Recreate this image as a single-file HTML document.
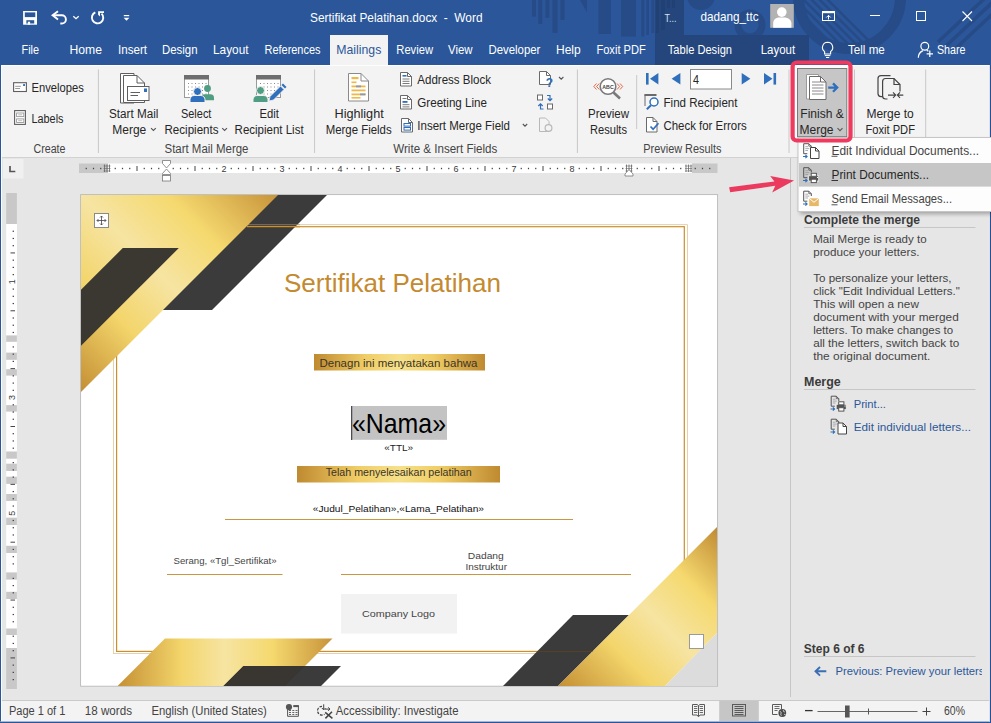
<!DOCTYPE html>
<html lang="en"><head><meta charset="utf-8"><title>Sertifikat Pelatihan.docx - Word</title>
<style>
html,body{margin:0;padding:0;background:#e6e6e6;overflow:hidden}
svg{display:block;font-family:"Liberation Sans",sans-serif}
text{white-space:pre}
</style></head><body>
<svg width="991" height="723" viewBox="0 0 991 723">
<defs>
<clipPath id="hd"><rect x="0" y="0" width="991" height="65"/></clipPath>
<clipPath id="bigc"><circle cx="849.5" cy="-2.5" r="56"/></clipPath>
<clipPath id="pg"><rect x="81" y="195" width="636" height="491"/></clipPath>
<linearGradient id="gTL" gradientUnits="userSpaceOnUse" x1="81" y1="391" x2="277" y2="195">
<stop offset="0" stop-color="#c48f33"/><stop offset="0.28" stop-color="#f3d56b"/><stop offset="0.5" stop-color="#f6e4a2"/><stop offset="0.72" stop-color="#f5d96f"/><stop offset="1" stop-color="#c8943a"/></linearGradient>
<linearGradient id="gBR" gradientUnits="userSpaceOnUse" x1="558" y1="686" x2="717" y2="527">
<stop offset="0" stop-color="#c48f33"/><stop offset="0.3" stop-color="#f3d56b"/><stop offset="0.52" stop-color="#f6e4a2"/><stop offset="0.74" stop-color="#f5d96f"/><stop offset="1" stop-color="#c08a32"/></linearGradient>
<linearGradient id="gBL" gradientUnits="userSpaceOnUse" x1="117" y1="0" x2="332" y2="0">
<stop offset="0" stop-color="#c48f33"/><stop offset="0.3" stop-color="#f3d56b"/><stop offset="0.5" stop-color="#f6e4a2"/><stop offset="0.72" stop-color="#f5d96f"/><stop offset="1" stop-color="#c8943a"/></linearGradient>
<linearGradient id="gBan" x1="0" y1="0" x2="1" y2="0">
<stop offset="0" stop-color="#bf8a30"/><stop offset="0.3" stop-color="#f0cd66"/><stop offset="0.5" stop-color="#f6e08a"/><stop offset="0.7" stop-color="#f0cd66"/><stop offset="1" stop-color="#bf8a30"/></linearGradient>
<clipPath id="pclip"><rect x="790" y="660" width="192" height="25"/></clipPath>
<filter id="sh" x="-10%" y="-10%" width="120%" height="130%"><feGaussianBlur stdDeviation="2.2"/></filter>
</defs>
<rect x="0" y="0" width="991" height="65" fill="#2b579a" />
<g clip-path="url(#hd)">
<rect x="532" y="0" width="4" height="16.5" fill="#264b87" />
<rect x="538.3" y="0" width="4" height="24" fill="#264b87" />
<rect x="545.4" y="0" width="4" height="17.7" fill="#264b87" />
<rect x="552.5" y="0" width="5" height="32.8" fill="#264b87" />
<rect x="560.5" y="0" width="4" height="20" fill="#264b87" />
<rect x="598.4" y="0" width="12.6" height="34" fill="#264b87" />
<rect x="621" y="0" width="15" height="36.6" fill="#264b87" />
<rect x="641.3" y="0" width="3" height="36.6" fill="#264b87" />
<rect x="646.3" y="0" width="2.6" height="35" fill="#264b87" />
<rect x="651.4" y="0" width="3" height="33" fill="#264b87" />
<path d="M580 0 H587 V12.6 Z" fill="#264b87"/>
<circle cx="701" cy="-4" r="14" fill="#264b87"/>
<g fill="none" stroke="#264b87">
<circle cx="750" cy="25" r="12" stroke-width="7"/>
<circle cx="849.5" cy="-2.5" r="51" stroke-width="11"/>
<g clip-path="url(#bigc)"><path d="M786 -2 L836 48 M794 -2 L844 48 M802 -2 L852 48 M810 -2 L860 48 M818 -2 L868 48 M826 -2 L876 48" stroke-width="2.6"/></g>
<path d="M938 42 L985 -2 M946 46 L995 0 M954 50 L1000 7" stroke-width="3.5"/>
</g></g>
<rect x="655" y="0" width="29" height="35" fill="#24467c" />
<rect x="655" y="35" width="154" height="30" fill="#24467c" />
<rect x="656" y="0" width="3" height="33" fill="#214175" />
<rect x="661" y="0" width="4" height="30" fill="#214175" />
<rect x="667" y="0" width="3" height="8" fill="#214175" />
<rect x="672" y="0" width="3" height="8" fill="#214175" />
<rect x="23.1" y="11" width="13.9" height="13.7" fill="#ffffff" />
<rect x="24.8" y="12.4" width="10.5" height="4.7" fill="#2b579a" />
<rect x="26.2" y="20.2" width="8" height="3.3" fill="#2b579a" />
<rect x="24.8" y="19.8" width="1.4" height="3.7" fill="#ffffff" />
<rect x="27.8" y="21.7" width="2.3" height="3" fill="#ffffff" />
<path d="M53 15.3 H61.8 a4.1 4.1 0 0 1 0 8.2 H60.3" fill="none" stroke="#ffffff" stroke-width="1.9"/>
<path d="M58 11.2 L52.6 15.3 L58 19.4" fill="none" stroke="#ffffff" stroke-width="1.9"/>
<path d="M73.3 16.2 L76 18.7 L78.7 16.2" fill="none" stroke="#ffffff" stroke-width="1.3"/>
<path d="M95.3 12.4 A5.7 5.7 0 1 0 101.6 13.6" fill="none" stroke="#ffffff" stroke-width="1.9"/>
<path d="M98.1 11.2 H104 V12.9 H100 V16.5 L98.1 14.8 Z" fill="#ffffff"/>
<rect x="123.8" y="15" width="5.4" height="1.2" fill="#ffffff" />
<path d="M123.6 17.8 H129.4 L126.5 20.8 Z" fill="#ffffff"/>
<text x="310" y="22.3" font-size="12.5" fill="#ffffff" textLength="172.5" lengthAdjust="spacingAndGlyphs">Sertifikat Pelatihan.docx  -  Word</text>
<text x="664.5" y="22" font-size="10.5" fill="#d8e0ee" textLength="12" lengthAdjust="spacingAndGlyphs">T...</text>
<text x="700.5" y="20.8" font-size="12.7" fill="#ffffff" textLength="58" lengthAdjust="spacingAndGlyphs">dadang_ttc</text>
<rect x="770.2" y="4" width="23.6" height="23.8" fill="#b2b2b2" />
<circle cx="781.8" cy="12.1" r="4.8" fill="#fff"/>
<path d="M773.2 27.8 V23.2 C773.2 19.6 776.3 17.5 779 17.5 H784.6 C787.3 17.5 791.4 19.6 791.4 23.2 V27.8 Z" fill="#ffffff"/>
<rect x="822.5" y="11.5" width="12" height="9" fill="none" stroke="#ffffff" stroke-width="1"/>
<rect x="822" y="11" width="13" height="2.2" fill="#ffffff" />
<path d="M828.5 19.5 V15.5 M826.3 17.5 L828.5 15.3 L830.7 17.5" fill="none" stroke="#ffffff" stroke-width="1"/>
<line x1="870" y1="15.5" x2="880" y2="15.5" stroke="#ffffff" stroke-width="1" />
<rect x="916.5" y="11.5" width="9" height="9" fill="none" stroke="#ffffff" stroke-width="1"/>
<path d="M962.5 11.5 L972 21 M972 11.5 L962.5 21" fill="none" stroke="#ffffff" stroke-width="1.1"/>
<rect x="330" y="35" width="58" height="31" fill="#f3f3f3" />
<text x="21.5" y="53.7" font-size="12.7" fill="#ffffff" textLength="17.5" lengthAdjust="spacingAndGlyphs">File</text>
<text x="69.5" y="53.7" font-size="12.7" fill="#ffffff" textLength="32.5" lengthAdjust="spacingAndGlyphs">Home</text>
<text x="118" y="53.7" font-size="12.7" fill="#ffffff" textLength="29" lengthAdjust="spacingAndGlyphs">Insert</text>
<text x="162" y="53.7" font-size="12.7" fill="#ffffff" textLength="35.5" lengthAdjust="spacingAndGlyphs">Design</text>
<text x="213" y="53.7" font-size="12.7" fill="#ffffff" textLength="35.5" lengthAdjust="spacingAndGlyphs">Layout</text>
<text x="264.5" y="53.7" font-size="12.7" fill="#ffffff" textLength="56" lengthAdjust="spacingAndGlyphs">References</text>
<text x="396.3" y="53.7" font-size="12.7" fill="#ffffff" textLength="36.7" lengthAdjust="spacingAndGlyphs">Review</text>
<text x="448" y="53.7" font-size="12.7" fill="#ffffff" textLength="24.5" lengthAdjust="spacingAndGlyphs">View</text>
<text x="488.4" y="53.7" font-size="12.7" fill="#ffffff" textLength="52" lengthAdjust="spacingAndGlyphs">Developer</text>
<text x="556" y="53.7" font-size="12.7" fill="#ffffff" textLength="24.7" lengthAdjust="spacingAndGlyphs">Help</text>
<text x="596.4" y="53.7" font-size="12.7" fill="#ffffff" textLength="49.4" lengthAdjust="spacingAndGlyphs">Foxit PDF</text>
<text x="667.8" y="53.7" font-size="12.7" fill="#ffffff" textLength="64.2" lengthAdjust="spacingAndGlyphs">Table Design</text>
<text x="760.7" y="53.7" font-size="12.7" fill="#ffffff" textLength="34.5" lengthAdjust="spacingAndGlyphs">Layout</text>
<text x="848" y="53.7" font-size="12.7" fill="#ffffff" textLength="36.8" lengthAdjust="spacingAndGlyphs">Tell me</text>
<text x="937" y="53.7" font-size="12.7" fill="#ffffff" textLength="28.5" lengthAdjust="spacingAndGlyphs">Share</text>
<text x="336.3" y="53.7" font-size="12.7" fill="#2b579a" textLength="45" lengthAdjust="spacingAndGlyphs">Mailings</text>
<path d="M827.6 42.2 a5.2 5.2 0 0 1 3 9.4 v2.4 h-6 v-2.4 a5.2 5.2 0 0 1 3 -9.4 Z" fill="none" stroke="#ffffff" stroke-width="1.1"/>
<line x1="824.8" y1="55.6" x2="830.4" y2="55.6" stroke="#ffffff" stroke-width="1" />
<line x1="826" y1="57.5" x2="829.2" y2="57.5" stroke="#ffffff" stroke-width="1" />
<circle cx="924.8" cy="46.3" r="3.9" fill="none" stroke="#ffffff" stroke-width="1.2"/>
<path d="M918.3 57.8 a8 8 0 0 1 4.6 -7.2 M926.8 50.4 a6 6 0 0 1 1.6 0.9" fill="none" stroke="#ffffff" stroke-width="1.2"/>
<path d="M929.8 50.6 V57 M926.6 53.8 H933" fill="none" stroke="#ffffff" stroke-width="1.2"/>
<rect x="0" y="65" width="991" height="1" fill="#fdfdfb" />
<rect x="0" y="66" width="991" height="91" fill="#f3f3f3" />
<rect x="0" y="157" width="991" height="1" fill="#d2d2d2" />
<line x1="98.4" y1="69.5" x2="98.4" y2="153" stroke="#c8c8c8" stroke-width="1" />
<line x1="314.6" y1="69.5" x2="314.6" y2="153" stroke="#c8c8c8" stroke-width="1" />
<line x1="577.4" y1="69.5" x2="577.4" y2="153" stroke="#c8c8c8" stroke-width="1" />
<line x1="789" y1="69.5" x2="789" y2="153" stroke="#c8c8c8" stroke-width="1" />
<line x1="854.5" y1="69.5" x2="854.5" y2="153" stroke="#c8c8c8" stroke-width="1" />
<line x1="925.7" y1="69.5" x2="925.7" y2="153" stroke="#c8c8c8" stroke-width="1" />
<line x1="636.7" y1="75" x2="636.7" y2="129" stroke="#c8c8c8" stroke-width="1" />
<text x="33.5" y="152.8" font-size="12.3" fill="#444444" textLength="32" lengthAdjust="spacingAndGlyphs">Create</text>
<text x="164.5" y="152.8" font-size="12.3" fill="#444444" textLength="84" lengthAdjust="spacingAndGlyphs">Start Mail Merge</text>
<text x="393.3" y="152.8" font-size="12.3" fill="#444444" textLength="104" lengthAdjust="spacingAndGlyphs">Write &amp; Insert Fields</text>
<text x="643.3" y="152.8" font-size="12.3" fill="#444444" textLength="78.2" lengthAdjust="spacingAndGlyphs">Preview Results</text>
<rect x="13.6" y="82.7" width="12.8" height="8.8" fill="#fff" stroke="#5f5f5f" stroke-width="1.1"/>
<line x1="15.2" y1="86.3" x2="20.9" y2="86.3" stroke="#999" stroke-width="1" />
<line x1="15.2" y1="88.5" x2="20" y2="88.5" stroke="#999" stroke-width="1" />
<rect x="23.1" y="84.1" width="1.9" height="1.9" fill="#2f6fbb" />
<text x="31.5" y="91.5" font-size="12.3" fill="#262626" textLength="52.3" lengthAdjust="spacingAndGlyphs">Envelopes</text>
<rect x="14.6" y="110.6" width="10.8" height="13.8" fill="#fff" stroke="#5f5f5f" stroke-width="1.1"/>
<rect x="16.6" y="113" width="7.2" height="3.6" fill="none" stroke="#999" stroke-width="0.9"/>
<rect x="16.6" y="118.9" width="7.2" height="3.6" fill="none" stroke="#999" stroke-width="0.9"/>
<line x1="18.2" y1="114.8" x2="22.2" y2="114.8" stroke="#aaa" stroke-width="0.8" />
<line x1="18.2" y1="120.7" x2="22.2" y2="120.7" stroke="#aaa" stroke-width="0.8" />
<text x="31.5" y="122.6" font-size="12.3" fill="#262626" textLength="32" lengthAdjust="spacingAndGlyphs">Labels</text>
<path d="M120.5 73.5 H134 V103 H120.5 Z" fill="#fff" stroke="#5f5f5f" stroke-width="1"/>
<path d="M123.5 75.5 H137 L144.5 83 V102.5 H123.5 Z" fill="#fff" stroke="#5f5f5f" stroke-width="1"/>
<path d="M137 75.5 V83 H144.5" fill="none" stroke="#5f5f5f" stroke-width="1"/>
<rect x="127.5" y="86.5" width="21.5" height="14" fill="#fff" stroke="#5f5f5f" stroke-width="1"/>
<line x1="130.5" y1="92.5" x2="140" y2="92.5" stroke="#5f5f5f" stroke-width="1" />
<line x1="130.5" y1="95.5" x2="138" y2="95.5" stroke="#5f5f5f" stroke-width="1" />
<rect x="144" y="88.5" width="3" height="3.5" fill="#2f6fbb" />
<text x="109" y="118" font-size="12.3" fill="#262626" textLength="49.4" lengthAdjust="spacingAndGlyphs">Start Mail</text>
<text x="112.3" y="133.7" font-size="12.3" fill="#262626" textLength="34" lengthAdjust="spacingAndGlyphs">Merge</text>
<path d="M151 128.1 L153.4 130.5 L155.8 128.1" fill="none" stroke="#555" stroke-width="1.1"/>
<rect x="184.5" y="75.5" width="24" height="22" fill="#fff" stroke="#9a9a9a" stroke-width="1"/>
<rect x="184" y="75" width="25" height="4.5" fill="#6e6e6e" />
<rect x="188" y="83" width="1" height="1" fill="#8a8a8a" />
<rect x="191.5" y="83" width="1" height="1" fill="#8a8a8a" />
<rect x="195" y="83" width="1" height="1" fill="#8a8a8a" />
<rect x="198.5" y="83" width="1" height="1" fill="#8a8a8a" />
<rect x="202" y="83" width="1" height="1" fill="#8a8a8a" />
<rect x="205.5" y="83" width="1" height="1" fill="#8a8a8a" />
<rect x="188" y="86.5" width="1" height="1" fill="#8a8a8a" />
<rect x="191.5" y="86.5" width="1" height="1" fill="#8a8a8a" />
<rect x="195" y="86.5" width="1" height="1" fill="#8a8a8a" />
<rect x="198.5" y="86.5" width="1" height="1" fill="#8a8a8a" />
<rect x="202" y="86.5" width="1" height="1" fill="#8a8a8a" />
<rect x="205.5" y="86.5" width="1" height="1" fill="#8a8a8a" />
<rect x="188" y="90" width="1" height="1" fill="#8a8a8a" />
<rect x="191.5" y="90" width="1" height="1" fill="#8a8a8a" />
<rect x="195" y="90" width="1" height="1" fill="#8a8a8a" />
<rect x="198.5" y="90" width="1" height="1" fill="#8a8a8a" />
<rect x="202" y="90" width="1" height="1" fill="#8a8a8a" />
<rect x="205.5" y="90" width="1" height="1" fill="#8a8a8a" />
<rect x="188" y="93.5" width="1" height="1" fill="#8a8a8a" />
<rect x="191.5" y="93.5" width="1" height="1" fill="#8a8a8a" />
<rect x="195" y="93.5" width="1" height="1" fill="#8a8a8a" />
<rect x="198.5" y="93.5" width="1" height="1" fill="#8a8a8a" />
<rect x="202" y="93.5" width="1" height="1" fill="#8a8a8a" />
<rect x="205.5" y="93.5" width="1" height="1" fill="#8a8a8a" />
<circle cx="207.5" cy="88.5" r="3.4" fill="#4f9d83"/>
<path d="M201 100.2 v-2.4 a3.6 3.6 0 0 1 3.6 -3.6 h5.8 a3.6 3.6 0 0 1 3.6 3.6 V100.2 Z" fill="#4f9d83"/>
<circle cx="197.5" cy="91.5" r="4" fill="#2f6fbb" stroke="#f3f3f3" stroke-width="1"/>
<path d="M190 102.5 v-2.8 a4.2 4.2 0 0 1 4.2 -4.2 h6.6 a4.2 4.2 0 0 1 4.2 4.2 V102.5 Z" fill="#2f6fbb" stroke="#f3f3f3" stroke-width="1"/>
<text x="181" y="118" font-size="12.3" fill="#262626" textLength="30.4" lengthAdjust="spacingAndGlyphs">Select</text>
<text x="164.5" y="133.7" font-size="12.3" fill="#262626" textLength="54" lengthAdjust="spacingAndGlyphs">Recipients</text>
<path d="M222.2 128.1 L224.6 130.5 L227 128.1" fill="none" stroke="#555" stroke-width="1.1"/>
<rect x="256.5" y="75.5" width="24" height="22" fill="#fff" stroke="#9a9a9a" stroke-width="1"/>
<rect x="256" y="75" width="25" height="4.5" fill="#6e6e6e" />
<rect x="260" y="83" width="1" height="1" fill="#8a8a8a" />
<rect x="263.5" y="83" width="1" height="1" fill="#8a8a8a" />
<rect x="267" y="83" width="1" height="1" fill="#8a8a8a" />
<rect x="270.5" y="83" width="1" height="1" fill="#8a8a8a" />
<rect x="274" y="83" width="1" height="1" fill="#8a8a8a" />
<rect x="277.5" y="83" width="1" height="1" fill="#8a8a8a" />
<rect x="260" y="86.5" width="1" height="1" fill="#8a8a8a" />
<rect x="263.5" y="86.5" width="1" height="1" fill="#8a8a8a" />
<rect x="267" y="86.5" width="1" height="1" fill="#8a8a8a" />
<rect x="270.5" y="86.5" width="1" height="1" fill="#8a8a8a" />
<rect x="274" y="86.5" width="1" height="1" fill="#8a8a8a" />
<rect x="277.5" y="86.5" width="1" height="1" fill="#8a8a8a" />
<rect x="260" y="90" width="1" height="1" fill="#8a8a8a" />
<rect x="263.5" y="90" width="1" height="1" fill="#8a8a8a" />
<rect x="267" y="90" width="1" height="1" fill="#8a8a8a" />
<rect x="270.5" y="90" width="1" height="1" fill="#8a8a8a" />
<rect x="274" y="90" width="1" height="1" fill="#8a8a8a" />
<rect x="277.5" y="90" width="1" height="1" fill="#8a8a8a" />
<rect x="260" y="93.5" width="1" height="1" fill="#8a8a8a" />
<rect x="263.5" y="93.5" width="1" height="1" fill="#8a8a8a" />
<rect x="267" y="93.5" width="1" height="1" fill="#8a8a8a" />
<rect x="270.5" y="93.5" width="1" height="1" fill="#8a8a8a" />
<rect x="274" y="93.5" width="1" height="1" fill="#8a8a8a" />
<rect x="277.5" y="93.5" width="1" height="1" fill="#8a8a8a" />
<circle cx="260.5" cy="90.5" r="4" fill="#4f9d83" stroke="#f3f3f3" stroke-width="1"/>
<path d="M253 102.5 v-2.8 a4.2 4.2 0 0 1 4.2 -4.2 h6.6 a4.2 4.2 0 0 1 4.2 4.2 V102.5 Z" fill="#4f9d83" stroke="#f3f3f3" stroke-width="1"/>
<path d="M270 96.5 L280.5 86 L284 89.5 L273.5 100 L269 101 Z" fill="#2f6fbb" stroke="#f3f3f3" stroke-width="0.8"/>
<path d="M281.5 85 L283 83.5 L286.5 87 L285 88.5 Z" fill="#2f6fbb"/>
<text x="259.6" y="118" font-size="12.3" fill="#262626" textLength="19.4" lengthAdjust="spacingAndGlyphs">Edit</text>
<text x="234.6" y="133.7" font-size="12.3" fill="#262626" textLength="69" lengthAdjust="spacingAndGlyphs">Recipient List</text>
<path d="M348.5 73.5 H361 L368.5 81 V101 H348.5 Z" fill="#fff" stroke="#8a8a8a" stroke-width="1"/>
<path d="M361 73.5 V81 H368.5" fill="none" stroke="#8a8a8a" stroke-width="1"/>
<rect x="351.5" y="77" width="7" height="2.2" fill="#f0b849" />
<rect x="351.5" y="81.5" width="5" height="1.6" fill="#f0b849" />
<rect x="351.5" y="85.5" width="14" height="1.8" fill="#f0b849" />
<rect x="351.5" y="89.5" width="14" height="1.8" fill="#f0b849" />
<rect x="351.5" y="93.5" width="14" height="1.8" fill="#f0b849" />
<rect x="351.5" y="97" width="9" height="1.6" fill="#f0b849" />
<rect x="356" y="85.5" width="5" height="1.8" fill="#8a9ab0" />
<rect x="360" y="93.5" width="5.5" height="1.8" fill="#8a9ab0" />
<text x="334.5" y="118" font-size="12.3" fill="#262626" textLength="49.2" lengthAdjust="spacingAndGlyphs">Highlight</text>
<text x="325.7" y="133.7" font-size="12.3" fill="#262626" textLength="66" lengthAdjust="spacingAndGlyphs">Merge Fields</text>
<path d="M400.5 72.5 h7 l4 4 v9.5 h-11 Z" fill="#fff" stroke="#6a6a6a" stroke-width="1"/>
<path d="M407.5 72.5 v4 h4" fill="none" stroke="#6a6a6a" stroke-width="1"/>
<rect x="402.5" y="75.0" width="4" height="1.6" fill="#2f6fbb" />
<line x1="402.5" y1="79.0" x2="409.5" y2="79.0" stroke="#7a7a7a" stroke-width="1" />
<line x1="402.5" y1="81.3" x2="409.5" y2="81.3" stroke="#7a7a7a" stroke-width="1" />
<line x1="402.5" y1="83.5" x2="409.5" y2="83.5" stroke="#7a7a7a" stroke-width="1" />
<text x="417.3" y="84" font-size="12.3" fill="#262626" textLength="73.7" lengthAdjust="spacingAndGlyphs">Address Block</text>
<path d="M400.5 95.5 h7 l4 4 v9.5 h-11 Z" fill="#fff" stroke="#6a6a6a" stroke-width="1"/>
<path d="M407.5 95.5 v4 h4" fill="none" stroke="#6a6a6a" stroke-width="1"/>
<line x1="402.5" y1="98.5" x2="406.5" y2="98.5" stroke="#7a7a7a" stroke-width="1" />
<rect x="402.5" y="101.0" width="5" height="1.8" fill="#2f6fbb" />
<line x1="402.5" y1="104.7" x2="409.5" y2="104.7" stroke="#7a7a7a" stroke-width="1" />
<line x1="402.5" y1="106.9" x2="409.5" y2="106.9" stroke="#7a7a7a" stroke-width="1" />
<text x="417.3" y="106.7" font-size="12.3" fill="#262626" textLength="69.7" lengthAdjust="spacingAndGlyphs">Greeting Line</text>
<path d="M401.5 118.5 h7 l4 4 v9.5 h-11 Z" fill="#fff" stroke="#6a6a6a" stroke-width="1"/>
<path d="M408.5 118.5 v4 h4" fill="none" stroke="#6a6a6a" stroke-width="1"/>
<rect x="404.0" y="123.5" width="6.5" height="2.6" fill="#fff" stroke="#2f6fbb" stroke-width="1"/>
<rect x="404.0" y="127.5" width="6.5" height="2.6" fill="#fff" stroke="#2f6fbb" stroke-width="1"/>
<text x="417.3" y="130.3" font-size="12.3" fill="#262626" textLength="92.7" lengthAdjust="spacingAndGlyphs">Insert Merge Field</text>
<path d="M522.8 124 L525 126.2 L527.2 124" fill="none" stroke="#555" stroke-width="1.1"/>
<path d="M539.5 71.5 h7 l4 4 v9 h-11 Z" fill="#fff" stroke="#6a6a6a" stroke-width="1"/>
<path d="M546.5 71.5 v4 h4" fill="none" stroke="#6a6a6a" stroke-width="1"/>
<text x="545.8" y="86.8" font-size="12" fill="#2f6fbb" font-weight="bold">?</text>
<path d="M559 77 L561.2 79.2 L563.4 77" fill="none" stroke="#555" stroke-width="1.1"/>
<rect x="537.5" y="95" width="5" height="5" fill="#fff" stroke="#6a6a6a" stroke-width="1"/>
<rect x="547.5" y="104" width="5" height="5" fill="#fff" stroke="#6a6a6a" stroke-width="1"/>
<path d="M547 95.5 h3 v5 M547.8 98.5 l2.2 2.2 l2.2 -2.2" fill="none" stroke="#2f6fbb" stroke-width="1.2"/>
<path d="M543.5 109 h-3 v-5 M538.3 106 l2.2 -2.2 l2.2 2.2" fill="none" stroke="#2f6fbb" stroke-width="1.2"/>
<path d="M539.5 118 h6 l3.5 3.5 v10 h-9.5 Z" fill="none" stroke="#b8b8b8" stroke-width="1"/>
<circle cx="548.5" cy="128" r="3.4" fill="#f3f3f3" stroke="#b8b8b8" stroke-width="1.2"/>
<circle cx="608" cy="86.5" r="7.8" fill="#fff" stroke="#7a7a7a" stroke-width="1.6"/>
<line x1="613.5" y1="92.5" x2="620" y2="98.5" stroke="#7a7a7a" stroke-width="2.6" />
<text x="602.3" y="89" font-size="6.2" fill="#444" font-weight="bold" textLength="11.4" lengthAdjust="spacingAndGlyphs">ABC</text>
<path d="M596.5 83.5 L593.8 86.5 L596.5 89.5 M599.3 83.5 L596.6 86.5 L599.3 89.5" fill="none" stroke="#e05a3a" stroke-width="0.9"/>
<path d="M617 83.5 L619.7 86.5 L617 89.5 M620 83.5 L622.7 86.5 L620 89.5" fill="none" stroke="#e05a3a" stroke-width="0.9"/>
<text x="588" y="118" font-size="12.3" fill="#262626" textLength="41" lengthAdjust="spacingAndGlyphs">Preview</text>
<text x="590" y="133.7" font-size="12.3" fill="#262626" textLength="37" lengthAdjust="spacingAndGlyphs">Results</text>
<rect x="646" y="73" width="2.6" height="11.6" fill="#2f6fbb" />
<path d="M658.4 73 V84.6 L650 78.8 Z" fill="#2f6fbb"/>
<path d="M680.4 73 V84.6 L671.6 78.8 Z" fill="#2f6fbb"/>
<rect x="690.5" y="69.5" width="41" height="19.5" fill="#fff" stroke="#8a8a8a" stroke-width="1"/>
<text x="693" y="84" font-size="12.3" fill="#262626" textLength="6" lengthAdjust="spacingAndGlyphs">4</text>
<path d="M741.7 73 V84.6 L750.4 78.8 Z" fill="#2f6fbb"/>
<path d="M764 73 V84.6 L772.5 78.8 Z" fill="#2f6fbb"/>
<rect x="773.5" y="73" width="2.6" height="11.6" fill="#2f6fbb" />
<path d="M645 106 V94.5 H656" fill="none" stroke="#6a6a6a" stroke-width="1"/>
<rect x="644.5" y="94" width="12" height="2" fill="#6a6a6a" />
<circle cx="654" cy="102" r="4" fill="#fff" stroke="#2f6fbb" stroke-width="1.5"/>
<line x1="651" y1="105.2" x2="646.8" y2="109.2" stroke="#2f6fbb" stroke-width="2" />
<text x="663.5" y="106.7" font-size="12.3" fill="#262626" textLength="74" lengthAdjust="spacingAndGlyphs">Find Recipient</text>
<path d="M646.5 117.5 h6.5 l4 4 v10.5 h-10.5 Z" fill="#fff" stroke="#6a6a6a" stroke-width="1"/>
<path d="M653 117.5 v4 h4" fill="none" stroke="#6a6a6a" stroke-width="1"/>
<path d="M650.5 126.5 l2.6 2.8 l5.4 -6" fill="none" stroke="#2f6fbb" stroke-width="1.7"/>
<text x="663.5" y="130.3" font-size="12.3" fill="#262626" textLength="83.2" lengthAdjust="spacingAndGlyphs">Check for Errors</text>
<rect x="794.5" y="65" width="54" height="73" fill="#fcfcfc" />
<rect x="797.5" y="68.5" width="49.3" height="68.2" fill="#c6c6c6" stroke="#7a7a7a" stroke-width="1"/>
<path d="M806.5 74.5 h12 V99 h-12 Z" fill="#fff" stroke="#9a9a9a" stroke-width="1"/>
<path d="M809.5 76.5 h11 l5.5 5.5 V99.5 h-16.5 Z" fill="#fff" stroke="#6a6a6a" stroke-width="1"/>
<path d="M820.5 76.5 v5.5 h5.5" fill="none" stroke="#6a6a6a" stroke-width="1"/>
<line x1="812" y1="82" x2="820" y2="82" stroke="#8a8a8a" stroke-width="1" />
<line x1="812" y1="85" x2="823.5" y2="85" stroke="#8a8a8a" stroke-width="1" />
<line x1="812" y1="88" x2="823.5" y2="88" stroke="#8a8a8a" stroke-width="1" />
<line x1="812" y1="91" x2="823.5" y2="91" stroke="#8a8a8a" stroke-width="1" />
<line x1="812" y1="94" x2="823.5" y2="94" stroke="#8a8a8a" stroke-width="1" />
<path d="M828.2 87.6 h7.5 M833 83.4 l4.2 4.2 l-4.2 4.2" fill="none" stroke="#2f6fbb" stroke-width="2.3"/>
<text x="800.3" y="118" font-size="12.3" fill="#262626" textLength="43.4" lengthAdjust="spacingAndGlyphs">Finish &amp;</text>
<text x="799.5" y="133.7" font-size="12.3" fill="#262626" textLength="34" lengthAdjust="spacingAndGlyphs">Merge</text>
<path d="M837.5 128.1 L840 130.6 L842.5 128.1" fill="none" stroke="#555" stroke-width="1.1"/>
<path d="M890.5 75.6 H881 a3 3 0 0 0 -3 3 V93.6 a3 3 0 0 0 3 3 H882.6" fill="none" stroke="#444" stroke-width="1.2"/>
<path d="M882.6 96 V81.5 a3 3 0 0 1 3 -3 H894 L900 84.5 V91.5" fill="none" stroke="#444" stroke-width="1.2"/>
<path d="M894 78.5 V84.5 H900" fill="none" stroke="#444" stroke-width="1.2"/>
<path d="M882.6 96 a3 3 0 0 0 3 3 H887.5" fill="none" stroke="#444" stroke-width="1.2"/>
<path d="M888 95.1 H895.6 M893 92.4 l2.7 2.7 l-2.7 2.7 M903.3 95.1 H897.4 M900 92.4 l-2.7 2.7 l2.7 2.7" fill="none" stroke="#444" stroke-width="1.1"/>
<text x="866.4" y="118" font-size="12.3" fill="#262626" textLength="47.4" lengthAdjust="spacingAndGlyphs">Merge to</text>
<text x="865.4" y="133.7" font-size="12.3" fill="#262626" textLength="49.6" lengthAdjust="spacingAndGlyphs">Foxit PDF</text>
<rect x="0" y="158" width="991" height="542" fill="#e6e6e6" />
<rect x="79" y="163.5" width="29" height="9.5" fill="#c8c8c8" />
<rect x="108" y="163.5" width="584" height="9.5" fill="#ffffff" />
<rect x="692" y="163.5" width="25.5" height="9.5" fill="#c8c8c8" />
<rect x="85.65" y="167.8" width="1.2" height="1.4" fill="#444" />
<rect x="92.9" y="167.8" width="1.2" height="1.4" fill="#444" />
<rect x="100.15" y="167.8" width="1.2" height="1.4" fill="#444" />
<rect x="114.65" y="167.8" width="1.2" height="1.4" fill="#444" />
<rect x="121.9" y="167.8" width="1.2" height="1.4" fill="#444" />
<rect x="129.15" y="167.8" width="1.2" height="1.4" fill="#444" />
<line x1="137.0" y1="166" x2="137.0" y2="171" stroke="#444" stroke-width="1" />
<rect x="143.65" y="167.8" width="1.2" height="1.4" fill="#444" />
<rect x="150.9" y="167.8" width="1.2" height="1.4" fill="#444" />
<rect x="158.15" y="167.8" width="1.2" height="1.4" fill="#444" />
<rect x="172.65" y="167.8" width="1.2" height="1.4" fill="#444" />
<rect x="179.9" y="167.8" width="1.2" height="1.4" fill="#444" />
<rect x="187.15" y="167.8" width="1.2" height="1.4" fill="#444" />
<line x1="195.0" y1="166" x2="195.0" y2="171" stroke="#444" stroke-width="1" />
<rect x="201.65" y="167.8" width="1.2" height="1.4" fill="#444" />
<rect x="208.9" y="167.8" width="1.2" height="1.4" fill="#444" />
<rect x="216.15" y="167.8" width="1.2" height="1.4" fill="#444" />
<text x="224.0" y="172" font-size="9" fill="#3a3a3a" text-anchor="middle">2</text>
<rect x="230.65" y="167.8" width="1.2" height="1.4" fill="#444" />
<rect x="237.9" y="167.8" width="1.2" height="1.4" fill="#444" />
<rect x="245.15" y="167.8" width="1.2" height="1.4" fill="#444" />
<line x1="253.0" y1="166" x2="253.0" y2="171" stroke="#444" stroke-width="1" />
<rect x="259.65" y="167.8" width="1.2" height="1.4" fill="#444" />
<rect x="266.9" y="167.8" width="1.2" height="1.4" fill="#444" />
<rect x="274.15" y="167.8" width="1.2" height="1.4" fill="#444" />
<text x="282.0" y="172" font-size="9" fill="#3a3a3a" text-anchor="middle">3</text>
<rect x="288.65" y="167.8" width="1.2" height="1.4" fill="#444" />
<rect x="295.9" y="167.8" width="1.2" height="1.4" fill="#444" />
<rect x="303.15" y="167.8" width="1.2" height="1.4" fill="#444" />
<line x1="311.0" y1="166" x2="311.0" y2="171" stroke="#444" stroke-width="1" />
<rect x="317.65" y="167.8" width="1.2" height="1.4" fill="#444" />
<rect x="324.9" y="167.8" width="1.2" height="1.4" fill="#444" />
<rect x="332.15" y="167.8" width="1.2" height="1.4" fill="#444" />
<text x="340.0" y="172" font-size="9" fill="#3a3a3a" text-anchor="middle">4</text>
<rect x="346.65" y="167.8" width="1.2" height="1.4" fill="#444" />
<rect x="353.9" y="167.8" width="1.2" height="1.4" fill="#444" />
<rect x="361.15" y="167.8" width="1.2" height="1.4" fill="#444" />
<line x1="369.0" y1="166" x2="369.0" y2="171" stroke="#444" stroke-width="1" />
<rect x="375.65" y="167.8" width="1.2" height="1.4" fill="#444" />
<rect x="382.9" y="167.8" width="1.2" height="1.4" fill="#444" />
<rect x="390.15" y="167.8" width="1.2" height="1.4" fill="#444" />
<text x="398.0" y="172" font-size="9" fill="#3a3a3a" text-anchor="middle">5</text>
<rect x="404.65" y="167.8" width="1.2" height="1.4" fill="#444" />
<rect x="411.9" y="167.8" width="1.2" height="1.4" fill="#444" />
<rect x="419.15" y="167.8" width="1.2" height="1.4" fill="#444" />
<line x1="427.0" y1="166" x2="427.0" y2="171" stroke="#444" stroke-width="1" />
<rect x="433.65" y="167.8" width="1.2" height="1.4" fill="#444" />
<rect x="440.9" y="167.8" width="1.2" height="1.4" fill="#444" />
<rect x="448.15" y="167.8" width="1.2" height="1.4" fill="#444" />
<text x="456.0" y="172" font-size="9" fill="#3a3a3a" text-anchor="middle">6</text>
<rect x="462.65" y="167.8" width="1.2" height="1.4" fill="#444" />
<rect x="469.9" y="167.8" width="1.2" height="1.4" fill="#444" />
<rect x="477.15" y="167.8" width="1.2" height="1.4" fill="#444" />
<line x1="485.0" y1="166" x2="485.0" y2="171" stroke="#444" stroke-width="1" />
<rect x="491.65" y="167.8" width="1.2" height="1.4" fill="#444" />
<rect x="498.9" y="167.8" width="1.2" height="1.4" fill="#444" />
<rect x="506.15" y="167.8" width="1.2" height="1.4" fill="#444" />
<text x="514.0" y="172" font-size="9" fill="#3a3a3a" text-anchor="middle">7</text>
<rect x="520.65" y="167.8" width="1.2" height="1.4" fill="#444" />
<rect x="527.9" y="167.8" width="1.2" height="1.4" fill="#444" />
<rect x="535.15" y="167.8" width="1.2" height="1.4" fill="#444" />
<line x1="543.0" y1="166" x2="543.0" y2="171" stroke="#444" stroke-width="1" />
<rect x="549.65" y="167.8" width="1.2" height="1.4" fill="#444" />
<rect x="556.9" y="167.8" width="1.2" height="1.4" fill="#444" />
<rect x="564.15" y="167.8" width="1.2" height="1.4" fill="#444" />
<text x="572.0" y="172" font-size="9" fill="#3a3a3a" text-anchor="middle">8</text>
<rect x="578.65" y="167.8" width="1.2" height="1.4" fill="#444" />
<rect x="585.9" y="167.8" width="1.2" height="1.4" fill="#444" />
<rect x="593.15" y="167.8" width="1.2" height="1.4" fill="#444" />
<line x1="601.0" y1="166" x2="601.0" y2="171" stroke="#444" stroke-width="1" />
<rect x="607.65" y="167.8" width="1.2" height="1.4" fill="#444" />
<rect x="614.9" y="167.8" width="1.2" height="1.4" fill="#444" />
<rect x="622.15" y="167.8" width="1.2" height="1.4" fill="#444" />
<rect x="636.65" y="167.8" width="1.2" height="1.4" fill="#444" />
<rect x="643.9" y="167.8" width="1.2" height="1.4" fill="#444" />
<rect x="651.15" y="167.8" width="1.2" height="1.4" fill="#444" />
<line x1="659.0" y1="166" x2="659.0" y2="171" stroke="#444" stroke-width="1" />
<rect x="665.65" y="167.8" width="1.2" height="1.4" fill="#444" />
<rect x="672.9" y="167.8" width="1.2" height="1.4" fill="#444" />
<rect x="680.15" y="167.8" width="1.2" height="1.4" fill="#444" />
<rect x="694.65" y="167.8" width="1.2" height="1.4" fill="#444" />
<rect x="701.9" y="167.8" width="1.2" height="1.4" fill="#444" />
<rect x="709.15" y="167.8" width="1.2" height="1.4" fill="#444" />
<line x1="104.5" y1="164.5" x2="104.5" y2="172" stroke="#666" stroke-width="0.8" />
<line x1="107" y1="164.5" x2="107" y2="172" stroke="#666" stroke-width="0.8" />
<line x1="109.5" y1="164.5" x2="109.5" y2="172" stroke="#666" stroke-width="0.8" />
<line x1="103.5" y1="166" x2="110.5" y2="166" stroke="#666" stroke-width="0.6" />
<line x1="103.5" y1="168.5" x2="110.5" y2="168.5" stroke="#666" stroke-width="0.6" />
<line x1="103.5" y1="171" x2="110.5" y2="171" stroke="#666" stroke-width="0.6" />
<line x1="626.5" y1="164.5" x2="626.5" y2="172" stroke="#666" stroke-width="0.8" />
<line x1="629" y1="164.5" x2="629" y2="172" stroke="#666" stroke-width="0.8" />
<line x1="631.5" y1="164.5" x2="631.5" y2="172" stroke="#666" stroke-width="0.8" />
<line x1="625.5" y1="166" x2="632.5" y2="166" stroke="#666" stroke-width="0.6" />
<line x1="625.5" y1="168.5" x2="632.5" y2="168.5" stroke="#666" stroke-width="0.6" />
<line x1="625.5" y1="171" x2="632.5" y2="171" stroke="#666" stroke-width="0.6" />
<line x1="686.0" y1="164.5" x2="686.0" y2="172" stroke="#666" stroke-width="0.8" />
<line x1="688.5" y1="164.5" x2="688.5" y2="172" stroke="#666" stroke-width="0.8" />
<line x1="691.0" y1="164.5" x2="691.0" y2="172" stroke="#666" stroke-width="0.8" />
<line x1="685.0" y1="166" x2="692.0" y2="166" stroke="#666" stroke-width="0.6" />
<line x1="685.0" y1="168.5" x2="692.0" y2="168.5" stroke="#666" stroke-width="0.6" />
<line x1="685.0" y1="171" x2="692.0" y2="171" stroke="#666" stroke-width="0.6" />
<path d="M162.5 160.5 h8 v3 l-4 4.5 l-4 -4.5 Z" fill="#fff" stroke="#777" stroke-width="0.8"/>
<path d="M162.5 173.5 l4 -4.5 l4 4.5 v1 h-8 Z" fill="#fff" stroke="#777" stroke-width="0.8"/>
<rect x="162.5" y="175.5" width="8" height="5.5" fill="#fff" stroke="#777" stroke-width="0.8"/>
<path d="M625 174 l4 -4.5 l4 4.5 v2 h-8 Z" fill="#fff" stroke="#777" stroke-width="0.8"/>
<rect x="3" y="159" width="20.5" height="19.5" fill="#f0f0f0" />
<path d="M10 166 v5.5 h5.3" fill="none" stroke="#555" stroke-width="1.7"/>
<rect x="6.2" y="193" width="10.7" height="31" fill="#c8c8c8" />
<rect x="6.2" y="224" width="10.7" height="424" fill="#ffffff" />
<rect x="6.2" y="648" width="10.7" height="41" fill="#c8c8c8" />
<rect x="6.2" y="335.4" width="10.7" height="6.400000000000034" fill="#c8c8c8" />
<rect x="6.2" y="352.6" width="10.7" height="7.199999999999989" fill="#c8c8c8" />
<rect x="6.2" y="369.2" width="10.7" height="6.400000000000034" fill="#c8c8c8" />
<rect x="6.2" y="405.1" width="10.7" height="6.5" fill="#c8c8c8" />
<rect x="6.2" y="451.5" width="10.7" height="7.199999999999989" fill="#c8c8c8" />
<rect x="6.2" y="463.7" width="10.7" height="7.300000000000011" fill="#c8c8c8" />
<rect x="6.2" y="476.7" width="10.7" height="7.199999999999989" fill="#c8c8c8" />
<rect x="6.2" y="494" width="10.7" height="7" fill="#c8c8c8" />
<rect x="6.2" y="517.7" width="10.7" height="7.2999999999999545" fill="#c8c8c8" />
<rect x="6.2" y="545.8" width="10.7" height="7.2000000000000455" fill="#c8c8c8" />
<rect x="6.2" y="572.4" width="10.7" height="7.2000000000000455" fill="#c8c8c8" />
<rect x="6.2" y="591.8" width="10.7" height="7.2000000000000455" fill="#c8c8c8" />
<rect x="6.2" y="628.5" width="10.7" height="6.5" fill="#c8c8c8" />
<rect x="12.6" y="230.631875" width="1.4" height="1.2" fill="#444" />
<rect x="12.6" y="237.86375" width="1.4" height="1.2" fill="#444" />
<rect x="12.6" y="245.095625" width="1.4" height="1.2" fill="#444" />
<line x1="10.5" y1="252.9275" x2="15" y2="252.9275" stroke="#444" stroke-width="1" />
<rect x="12.6" y="259.559375" width="1.4" height="1.2" fill="#444" />
<rect x="12.6" y="266.79125" width="1.4" height="1.2" fill="#444" />
<rect x="12.6" y="274.023125" width="1.4" height="1.2" fill="#444" />
<text transform="translate(15.4,281.855) rotate(-90)" font-size="9" fill="#3a3a3a" text-anchor="middle">1</text>
<rect x="12.6" y="288.486875" width="1.4" height="1.2" fill="#444" />
<rect x="12.6" y="295.71875" width="1.4" height="1.2" fill="#444" />
<rect x="12.6" y="302.950625" width="1.4" height="1.2" fill="#444" />
<line x1="10.5" y1="310.7825" x2="15" y2="310.7825" stroke="#444" stroke-width="1" />
<rect x="12.6" y="317.41437499999995" width="1.4" height="1.2" fill="#444" />
<rect x="12.6" y="324.64625" width="1.4" height="1.2" fill="#444" />
<rect x="12.6" y="331.87812499999995" width="1.4" height="1.2" fill="#444" />
<rect x="12.6" y="346.34187499999996" width="1.4" height="1.2" fill="#444" />
<rect x="12.6" y="353.57375" width="1.4" height="1.2" fill="#444" />
<rect x="12.6" y="360.80562499999996" width="1.4" height="1.2" fill="#444" />
<line x1="10.5" y1="368.63750000000005" x2="15" y2="368.63750000000005" stroke="#444" stroke-width="1" />
<rect x="12.6" y="375.26937499999997" width="1.4" height="1.2" fill="#444" />
<rect x="12.6" y="382.50125" width="1.4" height="1.2" fill="#444" />
<rect x="12.6" y="389.733125" width="1.4" height="1.2" fill="#444" />
<text transform="translate(15.4,397.565) rotate(-90)" font-size="9" fill="#3a3a3a" text-anchor="middle">3</text>
<rect x="12.6" y="404.196875" width="1.4" height="1.2" fill="#444" />
<rect x="12.6" y="411.42875" width="1.4" height="1.2" fill="#444" />
<rect x="12.6" y="418.660625" width="1.4" height="1.2" fill="#444" />
<line x1="10.5" y1="426.4925" x2="15" y2="426.4925" stroke="#444" stroke-width="1" />
<rect x="12.6" y="433.124375" width="1.4" height="1.2" fill="#444" />
<rect x="12.6" y="440.35625" width="1.4" height="1.2" fill="#444" />
<rect x="12.6" y="447.588125" width="1.4" height="1.2" fill="#444" />
<rect x="12.6" y="462.051875" width="1.4" height="1.2" fill="#444" />
<rect x="12.6" y="469.28375" width="1.4" height="1.2" fill="#444" />
<rect x="12.6" y="476.515625" width="1.4" height="1.2" fill="#444" />
<line x1="10.5" y1="484.3475" x2="15" y2="484.3475" stroke="#444" stroke-width="1" />
<rect x="12.6" y="490.979375" width="1.4" height="1.2" fill="#444" />
<rect x="12.6" y="498.21125" width="1.4" height="1.2" fill="#444" />
<rect x="12.6" y="505.443125" width="1.4" height="1.2" fill="#444" />
<text transform="translate(15.4,513.2750000000001) rotate(-90)" font-size="9" fill="#3a3a3a" text-anchor="middle">5</text>
<rect x="12.6" y="519.906875" width="1.4" height="1.2" fill="#444" />
<rect x="12.6" y="527.13875" width="1.4" height="1.2" fill="#444" />
<rect x="12.6" y="534.370625" width="1.4" height="1.2" fill="#444" />
<line x1="10.5" y1="542.2025000000001" x2="15" y2="542.2025000000001" stroke="#444" stroke-width="1" />
<rect x="12.6" y="548.834375" width="1.4" height="1.2" fill="#444" />
<rect x="12.6" y="556.06625" width="1.4" height="1.2" fill="#444" />
<rect x="12.6" y="563.2981249999999" width="1.4" height="1.2" fill="#444" />
<rect x="12.6" y="577.761875" width="1.4" height="1.2" fill="#444" />
<rect x="12.6" y="584.99375" width="1.4" height="1.2" fill="#444" />
<rect x="12.6" y="592.2256249999999" width="1.4" height="1.2" fill="#444" />
<line x1="10.5" y1="600.0575" x2="15" y2="600.0575" stroke="#444" stroke-width="1" />
<rect x="12.6" y="606.689375" width="1.4" height="1.2" fill="#444" />
<rect x="12.6" y="613.92125" width="1.4" height="1.2" fill="#444" />
<rect x="12.6" y="621.1531249999999" width="1.4" height="1.2" fill="#444" />
<rect x="12.6" y="635.616875" width="1.4" height="1.2" fill="#444" />
<rect x="12.6" y="642.84875" width="1.4" height="1.2" fill="#444" />
<rect x="12.6" y="650.0806249999999" width="1.4" height="1.2" fill="#444" />
<line x1="10.5" y1="657.9125" x2="15" y2="657.9125" stroke="#444" stroke-width="1" />
<rect x="12.6" y="664.5443750000001" width="1.4" height="1.2" fill="#444" />
<rect x="12.6" y="671.77625" width="1.4" height="1.2" fill="#444" />
<rect x="12.6" y="679.008125" width="1.4" height="1.2" fill="#444" />
<rect x="80.6" y="194.6" width="637" height="491.6" fill="#ffffff" stroke="#b8b8b8" stroke-width="0.9"/>
<g clip-path="url(#pg)">
<rect x="113.5" y="224.7" width="573.9" height="428.7" fill="none" stroke="#e2bd85" stroke-width="0.7"/>
<rect x="116.6" y="226.7" width="567.7" height="424.7" fill="none" stroke="#c8902f" stroke-width="1.2"/>
<path d="M277 195 H327 L212 310 H162 Z" fill="#3b3b3b"/>
<line x1="247" y1="224.7" x2="300" y2="224.7" stroke="#b08a55" stroke-width="0.7" />
<line x1="247" y1="226.7" x2="300" y2="226.7" stroke="#c8902f" stroke-width="1.2" />
<path d="M81 195 H278 L81 392 Z" fill="url(#gTL)"/>
<path d="M122.8 248 H178.8 L81 345.8 V289.8 Z" fill="#3b3731"/>
<path d="M165 638.6 H332.5 L285 686 H117.6 Z" fill="url(#gBL)"/>
<path d="M243.5 666 H341 L321 686 H223.5 Z" fill="#3b3b3b"/>
<path d="M243.5 666 H304.5 L284.5 686 H223.5 Z" fill="#393530"/>
<path d="M573 615 H629 L558 686 H503 Z" fill="#3b3b3b"/>
<line x1="538" y1="651.4" x2="593" y2="651.4" stroke="#5a4526" stroke-width="0.9" />
<path d="M717 527 V633 L665 686 H558 Z" fill="url(#gBR)"/>
<path d="M717 633 V686 H665 Z" fill="#dcdcdc"/>
</g>
<rect x="689.5" y="634.5" width="14" height="14" fill="#fff" stroke="#9a9a9a" stroke-width="1"/>
<rect x="94.5" y="213.5" width="14" height="14" fill="#fff" stroke="#8a8a8a" stroke-width="1"/>
<path d="M101.5 216 V225 M97 220.5 H106 M100 217.5 l1.5 -1.5 l1.5 1.5 M100 223.5 l1.5 1.5 l1.5 -1.5 M98.5 219 l-1.5 1.5 l1.5 1.5 M104.5 219 l1.5 1.5 l-1.5 1.5" fill="none" stroke="#444" stroke-width="0.8"/>
<text x="284" y="292" font-size="25.4" fill="#c48a30" textLength="217" lengthAdjust="spacingAndGlyphs">Sertifikat Pelatihan</text>
<rect x="314" y="354" width="171" height="16.5" fill="url(#gBan)" />
<text x="319.5" y="367.2" font-size="11.4" fill="#3a3428" textLength="158" lengthAdjust="spacingAndGlyphs">Denagn ini menyatakan bahwa</text>
<rect x="352" y="406" width="95" height="33.8" fill="#c3c3c3" />
<rect x="351.2" y="406" width="1" height="34" fill="#222" />
<text x="352" y="433" font-size="27.5" fill="#000" textLength="94" lengthAdjust="spacingAndGlyphs">«Nama»</text>
<text x="384.2" y="450.8" font-size="9.3" fill="#222" textLength="29" lengthAdjust="spacingAndGlyphs">«TTL»</text>
<rect x="297" y="466" width="203" height="16.5" fill="url(#gBan)" />
<text x="325.7" y="475.8" font-size="10.3" fill="#3a3428" textLength="146" lengthAdjust="spacingAndGlyphs">Telah menyelesaikan pelatihan</text>
<text x="312.8" y="511.8" font-size="9.5" fill="#111" textLength="171.2" lengthAdjust="spacingAndGlyphs">«Judul_Pelatihan»,«Lama_Pelatihan»</text>
<line x1="225" y1="519.5" x2="573" y2="519.5" stroke="#c9973f" stroke-width="1" />
<text x="173.6" y="564" font-size="9.3" fill="#444" textLength="103" lengthAdjust="spacingAndGlyphs">Serang, «Tgl_Sertifikat»</text>
<line x1="167" y1="574.5" x2="282.5" y2="574.5" stroke="#c9973f" stroke-width="1" />
<text x="467.8" y="559" font-size="9.3" fill="#444" textLength="36" lengthAdjust="spacingAndGlyphs">Dadang</text>
<text x="465.4" y="570" font-size="9.3" fill="#444" textLength="41.6" lengthAdjust="spacingAndGlyphs">Instruktur</text>
<line x1="341" y1="574.5" x2="631" y2="574.5" stroke="#c9973f" stroke-width="1" />
<rect x="341" y="594" width="116" height="39.5" fill="#f2f2f2" />
<text x="362" y="616.8" font-size="9.8" fill="#444" textLength="73" lengthAdjust="spacingAndGlyphs">Company Logo</text>
<line x1="790.5" y1="158" x2="790.5" y2="697" stroke="#c6c6c6" stroke-width="1" />
<text x="804" y="223.8" font-size="12" fill="#3b3b3b" font-weight="bold" textLength="116" lengthAdjust="spacingAndGlyphs">Complete the merge</text>
<line x1="804" y1="227.5" x2="975.5" y2="227.5" stroke="#c6c6c6" stroke-width="1" />
<text x="813.2" y="242.5" font-size="11" fill="#444444" textLength="113.4" lengthAdjust="spacingAndGlyphs">Mail Merge is ready to</text>
<text x="813.2" y="255.5" font-size="11" fill="#444444" textLength="106.3" lengthAdjust="spacingAndGlyphs">produce your letters.</text>
<text x="813.2" y="281.5" font-size="11" fill="#444444" textLength="138.4" lengthAdjust="spacingAndGlyphs">To personalize your letters,</text>
<text x="813.2" y="294.5" font-size="11" fill="#444444" textLength="146.6" lengthAdjust="spacingAndGlyphs">click "Edit Individual Letters."</text>
<text x="813.2" y="307.5" font-size="11" fill="#444444" textLength="105.7" lengthAdjust="spacingAndGlyphs">This will open a new</text>
<text x="813.2" y="320.5" font-size="11" fill="#444444" textLength="145.5" lengthAdjust="spacingAndGlyphs">document with your merged</text>
<text x="813.2" y="333.5" font-size="11" fill="#444444" textLength="140" lengthAdjust="spacingAndGlyphs">letters. To make changes to</text>
<text x="813.2" y="346.5" font-size="11" fill="#444444" textLength="146" lengthAdjust="spacingAndGlyphs">all the letters, switch back to</text>
<text x="813.2" y="359.5" font-size="11" fill="#444444" textLength="117.2" lengthAdjust="spacingAndGlyphs">the original document.</text>
<text x="804" y="385.8" font-size="12.2" fill="#3b3b3b" font-weight="bold" textLength="36.8" lengthAdjust="spacingAndGlyphs">Merge</text>
<line x1="804" y1="389.5" x2="975.5" y2="389.5" stroke="#c6c6c6" stroke-width="1" />
<path d="M834.8 406.2 H831.2 V396.2 H836.3 L838.8 398.7 V401.0" fill="none" stroke="#555" stroke-width="1"/>
<path d="M836.3 396.2 V398.7 H838.8" fill="none" stroke="#555" stroke-width="0.8"/>
<line x1="832.8" y1="399.2" x2="835.5" y2="399.2" stroke="#999" stroke-width="0.8" />
<line x1="832.8" y1="401.1" x2="836.8" y2="401.1" stroke="#999" stroke-width="0.8" />
<line x1="832.8" y1="403.0" x2="835.5" y2="403.0" stroke="#999" stroke-width="0.8" />
<path d="M830.5 409.0 h4 M832.9 407.4 l1.7 1.6 l-1.7 1.6" fill="none" stroke="#2f6fbb" stroke-width="1.1"/>
<rect x="836.2" y="404.3" width="10" height="5.2" fill="#555" stroke="#f6f6f6" stroke-width="0.7"/>
<rect x="838.7" y="401.8" width="5.2" height="3" fill="#fff" stroke="#555" stroke-width="1"/>
<rect x="838.7" y="407.7" width="5.2" height="3.4" fill="#fff" stroke="#555" stroke-width="1"/>
<rect x="844.5" y="405.5" width="1" height="1" fill="#fff" />
<text x="853.7" y="408" font-size="11" fill="#2b579a" textLength="32.3" lengthAdjust="spacingAndGlyphs">Print...</text>
<path d="M834.8 429.2 H831.2 V419.2 H836.3 L838.8 421.7 V424.0" fill="none" stroke="#555" stroke-width="1"/>
<path d="M836.3 419.2 V421.7 H838.8" fill="none" stroke="#555" stroke-width="0.8"/>
<line x1="832.8" y1="422.2" x2="835.5" y2="422.2" stroke="#999" stroke-width="0.8" />
<line x1="832.8" y1="424.1" x2="836.8" y2="424.1" stroke="#999" stroke-width="0.8" />
<line x1="832.8" y1="426.0" x2="835.5" y2="426.0" stroke="#999" stroke-width="0.8" />
<path d="M830.5 432.0 h4 M832.9 430.4 l1.7 1.6 l-1.7 1.6" fill="none" stroke="#2f6fbb" stroke-width="1.1"/>
<path d="M838.0 423.0 h5 l3.5 3.5 v7.5 h-8.5 Z" fill="#fff" stroke="#444" stroke-width="1"/>
<path d="M843.0 423.0 v3.5 h3.5" fill="none" stroke="#444" stroke-width="1"/>
<text x="853.7" y="431" font-size="11" fill="#2b579a" textLength="117.3" lengthAdjust="spacingAndGlyphs">Edit individual letters...</text>
<text x="803.8" y="652.7" font-size="12" fill="#3b3b3b" font-weight="bold" textLength="60.7" lengthAdjust="spacingAndGlyphs">Step 6 of 6</text>
<line x1="804" y1="656.5" x2="975.5" y2="656.5" stroke="#c6c6c6" stroke-width="1" />
<path d="M815.5 671.3 H826.3 M820 667 l-4.5 4.3 l4.5 4.3" fill="none" stroke="#3a6fb4" stroke-width="1.9"/>
<g clip-path="url(#pclip)">
<text x="835.5" y="675" font-size="11" fill="#2b579a" textLength="149" lengthAdjust="spacingAndGlyphs">Previous: Preview your letters</text>
</g>
<rect x="0" y="700" width="991" height="1" fill="#cacaca" />
<rect x="0" y="701" width="991" height="22" fill="#f3f3f3" />
<text x="8.9" y="714.5" font-size="12" fill="#444444" textLength="56.5" lengthAdjust="spacingAndGlyphs">Page 1 of 1</text>
<text x="84.8" y="714.5" font-size="12" fill="#444444" textLength="47.2" lengthAdjust="spacingAndGlyphs">18 words</text>
<text x="151.4" y="714.5" font-size="12" fill="#444444" textLength="115.4" lengthAdjust="spacingAndGlyphs">English (United States)</text>
<path d="M293.4 706.1 H298.4 V716.3 H287.6 V709.5" fill="none" stroke="#555" stroke-width="1"/>
<rect x="293.4" y="705.1" width="5.5" height="2" fill="#555" />
<rect x="289" y="710.1" width="2" height="0.9" fill="#555" />
<rect x="292.3" y="710.1" width="2" height="0.9" fill="#555" />
<rect x="295.5" y="710.1" width="2" height="0.9" fill="#555" />
<rect x="289" y="712.1" width="2" height="0.9" fill="#555" />
<rect x="292.3" y="712.1" width="2" height="0.9" fill="#555" />
<rect x="295.5" y="712.1" width="2" height="0.9" fill="#555" />
<rect x="289" y="714.1" width="2" height="0.9" fill="#555" />
<rect x="292.3" y="714.1" width="2" height="0.9" fill="#555" />
<rect x="295.5" y="714.1" width="2" height="0.9" fill="#555" />
<circle cx="289" cy="707.1" r="3.1" fill="#555"/>
<path d="M322 706.3 A4.4 4.4 0 1 0 324.5 714.3" fill="none" stroke="#444" stroke-width="1.2" stroke-dasharray="2.6 1.2"/>
<path d="M323.7 704.3 V709.6 M321.9 708 L323.7 709.9 L325.5 708" fill="none" stroke="#444" stroke-width="1"/>
<path d="M325 709.1 H329.8 M328.2 707.4 L330 709.1 L328.2 710.8" fill="none" stroke="#444" stroke-width="1"/>
<path d="M325.2 712.4 L332.4 718.3 M332 711.8 L325.4 718.4" fill="none" stroke="#444" stroke-width="1.5"/>
<text x="335.8" y="714.5" font-size="12" fill="#444444" textLength="122.7" lengthAdjust="spacingAndGlyphs">Accessibility: Investigate</text>
<rect x="719.2" y="701" width="39.6" height="20.3" fill="#c6c6c6" />
<path d="M692.5 704.5 h4.5 l1.5 1 l1.5 -1 h4.5 v10.5 h-4.5 l-1.5 1.8 l-1.5 -1.8 h-4.5 Z" fill="none" stroke="#5a5a5a" stroke-width="1"/>
<line x1="698.5" y1="705.5" x2="698.5" y2="716.5" stroke="#5a5a5a" stroke-width="1" />
<line x1="694" y1="706.5" x2="697.3" y2="706.5" stroke="#5a5a5a" stroke-width="0.9" />
<line x1="699.7" y1="706.5" x2="703" y2="706.5" stroke="#5a5a5a" stroke-width="0.9" />
<line x1="694" y1="708.5" x2="697.3" y2="708.5" stroke="#5a5a5a" stroke-width="0.9" />
<line x1="699.7" y1="708.5" x2="703" y2="708.5" stroke="#5a5a5a" stroke-width="0.9" />
<line x1="694" y1="710.5" x2="697.3" y2="710.5" stroke="#5a5a5a" stroke-width="0.9" />
<line x1="699.7" y1="710.5" x2="703" y2="710.5" stroke="#5a5a5a" stroke-width="0.9" />
<line x1="694" y1="712.5" x2="697.3" y2="712.5" stroke="#5a5a5a" stroke-width="0.9" />
<line x1="699.7" y1="712.5" x2="703" y2="712.5" stroke="#5a5a5a" stroke-width="0.9" />
<rect x="732.5" y="704.5" width="13" height="11.5" fill="none" stroke="#5a5a5a" stroke-width="1"/>
<line x1="734.5" y1="706.5" x2="743.5" y2="706.5" stroke="#5a5a5a" stroke-width="1" />
<line x1="734.5" y1="708.5" x2="743.5" y2="708.5" stroke="#5a5a5a" stroke-width="1" />
<line x1="734.5" y1="710.5" x2="743.5" y2="710.5" stroke="#5a5a5a" stroke-width="1" />
<line x1="734.5" y1="712.5" x2="743.5" y2="712.5" stroke="#5a5a5a" stroke-width="1" />
<line x1="734.5" y1="714.5" x2="743.5" y2="714.5" stroke="#5a5a5a" stroke-width="1" />
<path d="M781.5 709 V704.5 H772.5 V714.5 H777.5" fill="none" stroke="#5a5a5a" stroke-width="1"/>
<line x1="774.5" y1="706.5" x2="779.5" y2="706.5" stroke="#5a5a5a" stroke-width="0.9" />
<line x1="774.5" y1="708.5" x2="779.5" y2="708.5" stroke="#5a5a5a" stroke-width="0.9" />
<line x1="774.5" y1="710.5" x2="777.5" y2="710.5" stroke="#5a5a5a" stroke-width="0.9" />
<circle cx="782.3" cy="713" r="3.9" fill="#4a4a4a"/>
<path d="M780 711.2 q1.5 1 1 2.5 q-0.6 1 0.4 2 M783.3 710.2 q-0.3 1.5 1.5 1.8 M784 714.5 q0.8 -0.3 1.6 0.2" fill="none" stroke="#f3f3f3" stroke-width="0.8"/>
<line x1="805" y1="710.6" x2="812.6" y2="710.6" stroke="#333" stroke-width="1.3" />
<line x1="817.5" y1="711.5" x2="917.5" y2="711.5" stroke="#666" stroke-width="1" />
<rect x="845" y="705.5" width="4.6" height="12" fill="#555" />
<line x1="868.5" y1="708.5" x2="868.5" y2="714.5" stroke="#555" stroke-width="1" />
<path d="M922.5 711.5 h8 M926.5 707.5 v8" fill="none" stroke="#444" stroke-width="1"/>
<text x="944" y="715.2" font-size="12" fill="#444444" textLength="21" lengthAdjust="spacingAndGlyphs">60%</text>
<rect x="0" y="65" width="1" height="658" fill="#2b579a" />
<rect x="1" y="65" width="1" height="656.5" fill="#fbfbfb" />
<rect x="0" y="721" width="991" height="0.6" fill="#fdfdfb" />
<rect x="0" y="721.6" width="991" height="1.4" fill="#2b579a" />
<rect x="988.9" y="65" width="1" height="656.5" fill="#f5f2ee" />
<rect x="989.9" y="65" width="1.1" height="658" fill="#24509a" />
<rect x="800" y="140" width="193" height="74" fill="#000" opacity="0.30" filter="url(#sh)"/>
<rect x="798" y="137.5" width="194" height="74" fill="#fdfdfd" stroke="#c6c6c6" stroke-width="1"/>
<rect x="799" y="163" width="192" height="23.6" fill="#c6c6c6" />
<path d="M807.3 153.7 H803.7 V143.7 H808.8 L811.3 146.2 V148.5" fill="none" stroke="#555" stroke-width="1"/>
<path d="M808.8 143.7 V146.2 H811.3" fill="none" stroke="#555" stroke-width="0.8"/>
<line x1="805.3" y1="146.7" x2="808" y2="146.7" stroke="#999" stroke-width="0.8" />
<line x1="805.3" y1="148.6" x2="809.3" y2="148.6" stroke="#999" stroke-width="0.8" />
<line x1="805.3" y1="150.5" x2="808" y2="150.5" stroke="#999" stroke-width="0.8" />
<path d="M803 156.5 h4 M805.4 154.9 l1.7 1.6 l-1.7 1.6" fill="none" stroke="#2f6fbb" stroke-width="1.1"/>
<path d="M810.5 147.5 h5 l3.5 3.5 v7.5 h-8.5 Z" fill="#fff" stroke="#444" stroke-width="1"/>
<path d="M815.5 147.5 v3.5 h3.5" fill="none" stroke="#444" stroke-width="1"/>
<text x="831.5" y="154.5" font-size="12.3" fill="#444444" textLength="147.5" lengthAdjust="spacingAndGlyphs">Edit Individual Documents...</text>
<line x1="831.5" y1="156.3" x2="837.5" y2="156.3" stroke="#444444" stroke-width="0.9" />
<path d="M807.3 177.7 H803.7 V167.7 H808.8 L811.3 170.2 V172.5" fill="none" stroke="#555" stroke-width="1"/>
<path d="M808.8 167.7 V170.2 H811.3" fill="none" stroke="#555" stroke-width="0.8"/>
<line x1="805.3" y1="170.7" x2="808" y2="170.7" stroke="#999" stroke-width="0.8" />
<line x1="805.3" y1="172.6" x2="809.3" y2="172.6" stroke="#999" stroke-width="0.8" />
<line x1="805.3" y1="174.5" x2="808" y2="174.5" stroke="#999" stroke-width="0.8" />
<path d="M803 180.5 h4 M805.4 178.9 l1.7 1.6 l-1.7 1.6" fill="none" stroke="#2f6fbb" stroke-width="1.1"/>
<rect x="808.7" y="175.8" width="10" height="5.2" fill="#555" stroke="#f6f6f6" stroke-width="0.7"/>
<rect x="811.2" y="173.3" width="5.2" height="3" fill="#fff" stroke="#555" stroke-width="1"/>
<rect x="811.2" y="179.2" width="5.2" height="3.4" fill="#fff" stroke="#555" stroke-width="1"/>
<rect x="817" y="177" width="1" height="1" fill="#fff" />
<text x="831.5" y="178.7" font-size="12.3" fill="#262626" textLength="97.5" lengthAdjust="spacingAndGlyphs">Print Documents...</text>
<line x1="831.5" y1="180.5" x2="838" y2="180.5" stroke="#262626" stroke-width="0.9" />
<path d="M807.3 201.2 H803.7 V191.2 H808.8 L811.3 193.7 V196.0" fill="none" stroke="#555" stroke-width="1"/>
<path d="M808.8 191.2 V193.7 H811.3" fill="none" stroke="#555" stroke-width="0.8"/>
<line x1="805.3" y1="194.2" x2="808" y2="194.2" stroke="#999" stroke-width="0.8" />
<line x1="805.3" y1="196.1" x2="809.3" y2="196.1" stroke="#999" stroke-width="0.8" />
<line x1="805.3" y1="198.0" x2="808" y2="198.0" stroke="#999" stroke-width="0.8" />
<path d="M803 204.0 h4 M805.4 202.4 l1.7 1.6 l-1.7 1.6" fill="none" stroke="#2f6fbb" stroke-width="1.1"/>
<path d="M809.2 198.3 h9.6 v7.8 h-9.6 Z" fill="#e8b869"/>
<path d="M809.2 198.3 l4.8 4 l4.8 -4" fill="none" stroke="#fff" stroke-width="1"/>
<text x="831.5" y="203" font-size="12.3" fill="#444444" textLength="120.5" lengthAdjust="spacingAndGlyphs">Send Email Messages...</text>
<line x1="831.5" y1="204.8" x2="837.5" y2="204.8" stroke="#444444" stroke-width="0.9" />
<path d="M729.1 187.2 L774.4 181.4 L770.2 176.1 L794.1 180.5 L772.2 192.5 L775.3 185.8 L730.2 192.2 Z" fill="#ec3a5e"/>
<rect x="792.6" y="62.5" width="57.9" height="78" fill="none" stroke="#ee3a5e" stroke-width="4.2" rx="4" ry="4"/>
</svg>
</body></html>
